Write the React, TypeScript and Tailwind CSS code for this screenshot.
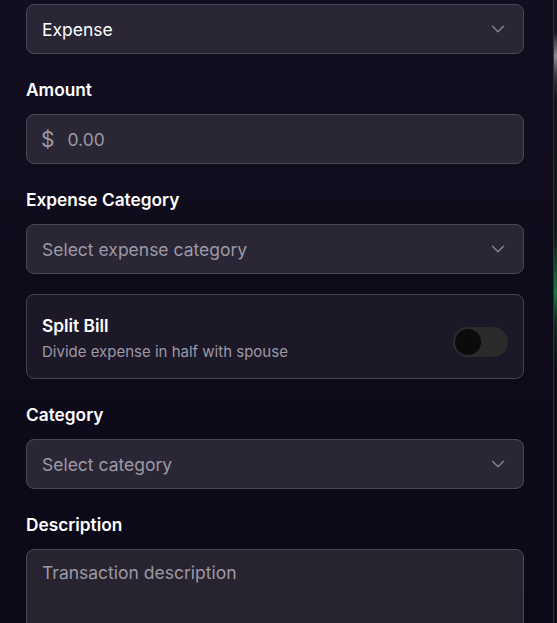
import { ChevronDown } from 'lucide-react';

function Select({ value, placeholder }: { value?: string; placeholder?: string }) {
  return (
    <div className="flex h-[50px] items-center justify-between rounded-lg border border-[#4a4656] bg-[#2a2636] pl-[15px] pr-[14px]">
      <span className={`pt-[3px] text-[17.5px] ${value ? 'text-white' : 'text-[#9c99a6]'}`}>{value ?? placeholder}</span>
      <ChevronDown size={22} strokeWidth={1.3} className="text-[#8e8a98]" />
    </div>
  );
}

function Label({ children }: { children: string }) {
  return <div className="mb-3 text-[17.3px] leading-6 font-semibold text-white">{children}</div>;
}

export default function App() {
  return (
    <div
      className="flex h-[623px] overflow-hidden bg-gradient-to-b from-[#120e1f] to-[#0b0817]"
      style={{ fontFamily: 'Inter, "Noto Sans", sans-serif' }}
    >
      <div className="flex-1 border-r border-[#34303f] pt-1 pl-[26px] pr-[29px]">
        <Select value="Expense" />

        <div className="mt-6">
          <Label>Amount</Label>
          <div className="flex h-[50px] items-center gap-[13px] rounded-lg border border-[#4a4656] bg-[#2a2636] pl-[14px] pr-4">
            <span className="pt-[2px] text-[21px] text-[#9c99a6]">$</span>
            <span className="pt-[3px] text-[17.5px] text-[#9c99a6]">0.00</span>
          </div>
        </div>

        <div className="mt-6">
          <Label>Expense Category</Label>
          <Select placeholder="Select expense category" />
        </div>

        <div className="mt-5 flex h-[85px] items-center justify-between rounded-lg border border-[#45414f] bg-[#1c1828] pl-[15px] pr-[15px]">
          <div className="flex flex-col gap-[3px] pt-[4px]">
            <span className="text-[17.3px] leading-6 font-semibold text-white">Split Bill</span>
            <span className="text-[15px] text-[#9c99a6]">Divide expense in half with spouse</span>
          </div>
          <div className="mt-[10px] flex h-[30px] w-[55px] items-center rounded-full bg-[#2b2b2b] px-[2px]">
            <div className="h-[26px] w-[26px] rounded-full bg-[#0b0b0b]" />
          </div>
        </div>

        <div className="mt-6">
          <Label>Category</Label>
          <Select placeholder="Select category" />
        </div>

        <div className="mt-6">
          <Label>Description</Label>
          <div className="h-[110px] rounded-lg border border-[#4a4656] bg-[#27232f] pl-[15px] pr-4 pt-[10px] text-[17.5px] text-[#9c99a6]">
            Transaction description
          </div>
        </div>
      </div>
      <div className="w-[3px] bg-[linear-gradient(to_bottom,#15121f_0%,#15121f_5%,#8a8a8f_9%,#3a3a3f_12%,#101015_16%,#101a16_38%,#147a3c_47%,#0f2a1c_52%,#0d0c14_60%,#0d0c14_100%)]" />
    </div>
  );
}
